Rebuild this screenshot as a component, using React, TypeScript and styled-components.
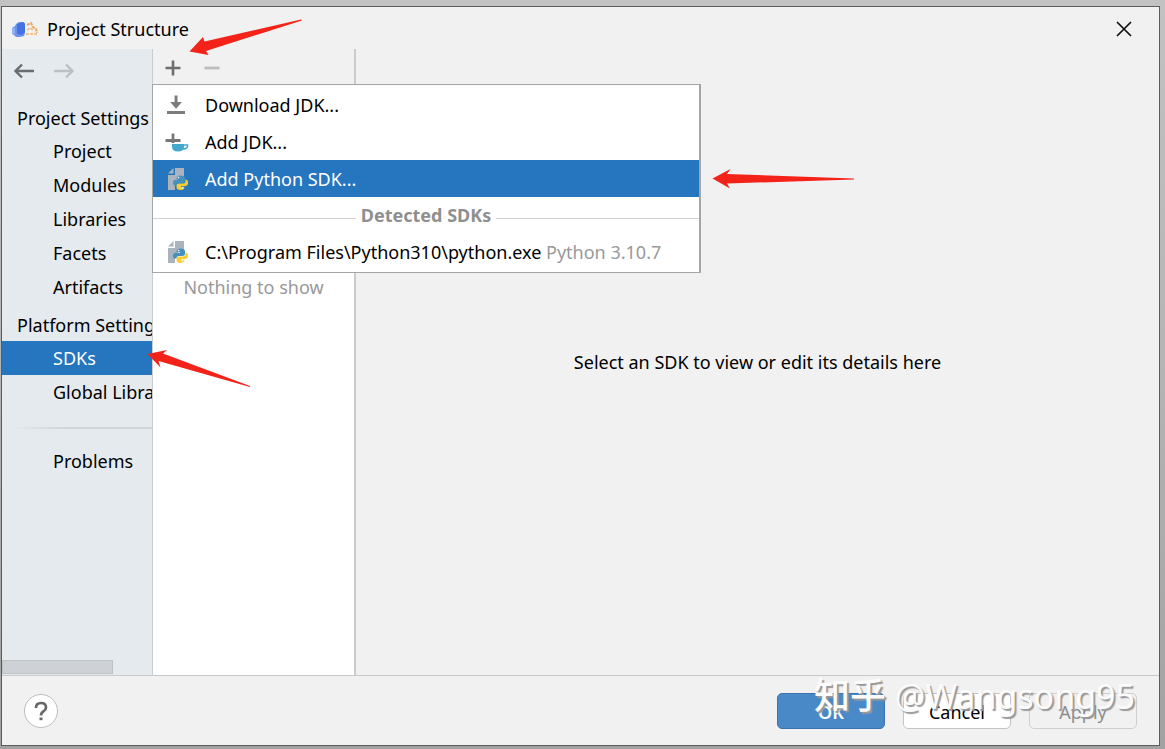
import React from "react";
import styled, { createGlobalStyle, css } from "styled-components";

const GlobalStyle = createGlobalStyle`
  *, *::before, *::after { box-sizing: border-box; }
  body {
    margin: 0;
    background: #b9b9b9;
    color: #000;
    font: 18px/24px "Noto Sans", "Noto Sans CJK SC", sans-serif;
  }
  button { font: inherit; color: inherit; padding: 0; border: 0; background: none; text-align: left; }
`;

const Desktop = styled.div`
  display: flex;
  min-height: 100vh;
  padding: 6px 5px 3px 1px;
  background: linear-gradient(#c2c2c2, #b4b4b4 50%, #a2a2a2);
`;

const Dialog = styled.main`
  position: relative;
  flex: 1;
  min-width: 0;
  display: flex;
  flex-direction: column;
  border: 1px solid #5c5c5c;
  background: #f1f1f1;
`;

const TitleBar = styled.header`
  display: flex;
  align-items: center;
  gap: 8px;
  height: 42px;
  padding: 2px 23px 0 10px;
`;

const Title = styled.h1`
  flex: 1;
  margin: 0;
  font-size: 18px;
  font-weight: 400;
`;

const IconButton = styled.button`
  display: flex;
  align-items: center;
  justify-content: center;
  width: 24px;
  height: 24px;
`;

const Body = styled.div`
  flex: 1;
  display: flex;
  min-height: 0;
`;

const Sidebar = styled.nav`
  display: flex;
  flex-direction: column;
  flex: 0 0 151px;
  overflow: hidden;
  white-space: nowrap;
  background: #e5eaee;
  border-right: 1px solid #c9cccf;
`;

const History = styled.div`
  display: flex;
  gap: 16px;
  height: 50px;
  padding: 10px 0 0 10px;
`;

const GroupTitle = styled.h2`
  margin: 0;
  height: 35px;
  padding: 7px 0 0 15px;
  font-size: 18px;
  line-height: 24px;
  font-weight: 400;
`;

const NavList = styled.ul`
  margin: 0;
  padding: 0 0 2px;
  list-style: none;
`;

const NavItem = styled.button<{ $active?: boolean }>`
  display: block;
  width: 100%;
  height: 34px;
  padding-left: 51px;
  ${(p) => p.$active && css`background: #2675bf; color: #fff;`}
`;

const Divider = styled.hr`
  width: 100%;
  height: 2px;
  margin: 16px 0 15px;
  border: 0;
  background: linear-gradient(90deg, transparent 8%, #d2d6d9 40%);
`;

const ScrollThumb = styled.div`
  width: 111px;
  height: 14px;
  margin: auto 0 1px;
  background: #ced1d5;
  border: 1px solid #bfc2c5;
`;

const ListPane = styled.section`
  position: relative;
  display: flex;
  flex-direction: column;
  flex: 0 0 203px;
  border-right: 2px solid #cbcbcb;
`;

const Toolbar = styled.div`
  display: flex;
  align-items: center;
  gap: 15px;
  height: 35px;
  padding: 3px 0 0 8px;
`;

const EmptyList = styled.div`
  flex: 1;
  padding-top: 191px;
  background: #fff;
  color: #999;
  text-align: center;
`;

const Popup = styled.div`
  position: absolute;
  z-index: 2;
  top: 35px;
  left: -1px;
  width: 549px;
  padding: 1px 0 2px;
  border: 1px solid #a5a5a5;
  border-right-width: 2px;
  background: #fff;
`;

const MenuItem = styled.button<{ $active?: boolean }>`
  display: flex;
  align-items: center;
  gap: 16px;
  width: 100%;
  height: 37px;
  padding-left: 12px;
  white-space: nowrap;
  ${(p) => p.$active && css`background: #2675bf; color: #fff;`}
`;

const Detail = styled.span`
  color: #999;
`;

const Separator = styled.div`
  display: flex;
  align-items: center;
  gap: 5px;
  height: 36px;
  color: #8f8f8f;
  font-weight: 700;
  &::before, &::after {
    content: "";
    flex: 1;
    height: 1px;
    margin-top: 6px;
    background: #d1d1d1;
  }
`;

const Details = styled.section`
  flex: 1;
  display: flex;
  align-items: center;
  justify-content: center;
`;

const Footer = styled.footer`
  position: relative;
  display: flex;
  align-items: center;
  gap: 18px;
  height: 70px;
  padding: 0 22px;
  border-top: 1px solid #c9c9c9;
`;

const HelpButton = styled.button`
  display: flex;
  align-items: center;
  justify-content: center;
  width: 34px;
  height: 34px;
  margin-right: auto;
  border: 1px solid #bdbdbd;
  border-radius: 50%;
  background: #fff;
`;

const DialogButton = styled.button<{ $kind?: "primary" | "disabled" }>`
  width: 108px;
  height: 36px;
  padding-top: 2px;
  border: 1px solid #c4c4c4;
  border-radius: 5px;
  background: #fff;
  text-align: center;
  ${(p) => p.$kind === "primary" && css`
    background: #4a89c8; border-color: #3c73ad; color: #fff; font-weight: 600;
  `}
  ${(p) => p.$kind === "disabled" && css`
    background: transparent; border-color: #cfcfcf; color: #8c8c8c;
  `}
`;

const Watermark = styled.div`
  position: absolute;
  right: 24px;
  top: 0;
  color: #fbfbfb;
  font-size: 34px;
  line-height: 40px;
  white-space: nowrap;
  pointer-events: none;
  text-shadow: 2px 2px 1px #999;
`;

const WatermarkSite = styled.span`
  font-size: 36px;
  font-weight: 500;
`;

const Annotations = styled.svg`
  position: absolute;
  z-index: 3;
  top: 0;
  left: 0;
  pointer-events: none;
`;

const AppIcon = () => (
  <svg width="27" height="18" viewBox="0 0 27 18" aria-hidden="true">
    <path d="M0 8l3-2 1-2 3-2h5l1 2v9l-1 3-4 1H4l-2-2-2-1z" fill="#6d93ee" />
    <path d="M5 4l6-2 2 2v8l-3 3-5-1z" fill="#4572e0" />
    <path d="M0 8h3v6H0z" fill="#8fb0f5" />
    <path d="M15 5l4-2 2 4 3 2 1 4" fill="none" stroke="#efa55a" strokeWidth="2" strokeDasharray="3 1" />
    <path d="M15 10l3-2 3 2M14 14h11" fill="none" stroke="#f0b476" strokeWidth="1.5" strokeDasharray="3 1" />
  </svg>
);

const Arrow = ({ forward }: { forward?: boolean }) => (
  <svg width="20" height="16" viewBox="0 0 20 16" fill="none" strokeWidth="2.4" aria-hidden="true"
    stroke={forward ? "#bcc0c3" : "#6a6d70"}>
    <path d={forward ? "M0 8h18M12 1.5L18.5 8 12 14.5" : "M20 8H2M8 1.5L1.5 8 8 14.5"} />
  </svg>
);

const CloseIcon = () => (
  <svg width="16" height="16" viewBox="0 0 16 16" stroke="#111" strokeWidth="1.7" aria-hidden="true">
    <path d="M1 1l14 14M15 1L1 15" />
  </svg>
);

const Plus = () => (
  <svg width="16" height="16" viewBox="0 0 16 16" stroke="#6e6e6e" strokeWidth="2.6" aria-hidden="true">
    <path d="M.5 8h15M8 .5v15" />
  </svg>
);

const Minus = () => (
  <svg width="16" height="16" viewBox="0 0 16 16" stroke="#bdbdbd" strokeWidth="2.8" aria-hidden="true">
    <path d="M.5 8h15" />
  </svg>
);

const DownloadIcon = () => (
  <svg width="24" height="24" viewBox="0 0 24 24" aria-hidden="true">
    <path d="M2 18h18v3H2z" fill="#7c7c7c" />
    <path d="M9.600 2.500h2.900V9h4.400L11.050 15.800 5.200 9h4.400z" fill="#7c7c7c" />
  </svg>
);

const AddJdkIcon = () => (
  <svg width="24" height="24" viewBox="0 0 24 24" aria-hidden="true">
    <path d="M.5 10.500h15M8 3.500V13" stroke="#777" strokeWidth="2.800" />
    <path d="M7 14h12v2.500q0 5-6 5t-6-5z" fill="#43a9cf" />
    <path d="M18 15h4.500v1.500q-.5 2.500-5 2.500" fill="none" stroke="#43a9cf" strokeWidth="1.500" />
  </svg>
);

const PythonIcon = () => (
  <svg width="24" height="24" viewBox="0 0 24 24" aria-hidden="true">
    <path d="M10 1h9v10h-4l-5 4v8H3V8h7z" fill="#a9b4bf" />
    <path d="M8.500 1v5.500H3z" fill="#a9b4bf" />
    <path d="M11.500 12q0-3.500 4-3.500 4.500 0 4.500 3v2.500q0 2-2.500 2h-3.500q-2.500 0-2.500 2.500H10q-2 0-2-2.800 0-3 3-3h4V12z" fill="#4590bd" />
    <path d="M20.500 12.500q2.500 0 2.500 3.200t-3 3.300h-4v.8h3.500q0 3.200-4 3.200T11.500 20v-1.500q0-2 2.500-2h4q2.500 0 2.500-2.500z" fill="#f5cf31" />
    <circle cx="13.600" cy="10.600" r=".8" fill="#fff" />
    <circle cx="17.500" cy="21" r=".8" fill="#fff" />
  </svg>
);

const HelpIcon = () => (
  <svg width="16" height="20" viewBox="0 0 16 20" aria-hidden="true">
    <path d="M3 7q0-5 5-5t5 4.500q0 2.200-2.500 3.800T8 14.500" fill="none" stroke="#686868" strokeWidth="2.700" />
    <path d="M6.500 16.500h3v2.700h-3z" fill="#686868" />
  </svg>
);

const project = ["Project", "Modules", "Libraries", "Facets", "Artifacts"];
const platform = ["SDKs", "Global Libraries"];

export default function App() {
  return (
    <>
      <GlobalStyle />
      <Desktop>
        <Dialog>
          <TitleBar>
            <AppIcon />
            <Title>Project Structure</Title>
            <IconButton aria-label="Close"><CloseIcon /></IconButton>
          </TitleBar>
          <Body>
            <Sidebar>
              <History>
                <IconButton aria-label="Back"><Arrow /></IconButton>
                <IconButton aria-label="Forward"><Arrow forward /></IconButton>
              </History>
              <GroupTitle>Project Settings</GroupTitle>
              <NavList>
                {project.map((name) => <li key={name}><NavItem>{name}</NavItem></li>)}
              </NavList>
              <GroupTitle>Platform Settings</GroupTitle>
              <NavList>
                {platform.map((name) => (
                  <li key={name}><NavItem $active={name === "SDKs"}>{name}</NavItem></li>
                ))}
              </NavList>
              <Divider />
              <NavItem>Problems</NavItem>
              <ScrollThumb />
            </Sidebar>
            <ListPane>
              <Toolbar>
                <IconButton aria-label="Add"><Plus /></IconButton>
                <IconButton aria-label="Remove"><Minus /></IconButton>
              </Toolbar>
              <EmptyList>Nothing to show</EmptyList>
              <Popup>
                <MenuItem><DownloadIcon />Download JDK...</MenuItem>
                <MenuItem><AddJdkIcon />Add JDK...</MenuItem>
                <MenuItem $active><PythonIcon />Add Python SDK...</MenuItem>
                <Separator>Detected SDKs</Separator>
                <MenuItem>
                  <PythonIcon />
                  <span>C:\Program Files\Python310\python.exe <Detail>Python 3.10.7</Detail></span>
                </MenuItem>
              </Popup>
            </ListPane>
            <Details>Select an SDK to view or edit its details here</Details>
          </Body>
          <Footer>
            <HelpButton aria-label="Help"><HelpIcon /></HelpButton>
            <DialogButton $kind="primary">OK</DialogButton>
            <DialogButton>Cancel</DialogButton>
            <DialogButton $kind="disabled">Apply</DialogButton>
            <Watermark><WatermarkSite>知乎</WatermarkSite> @Wangsong95</Watermark>
          </Footer>
          <Annotations width="860" height="400" viewBox="2 7 860 400" fill="#f4231a" aria-hidden="true">
            <path d="M189.500 51.500L203 37l1.500 4.500L301 19.500l1 1L206 51l2.500 4z" />
            <path d="M712.500 178.500L730.500 169l-3.500 5 127 4.500v1L727 183.500l3 5z" />
            <path d="M147.500 354L167 350l-4 3.500 87 32.500v1L158.500 361l2 6.500z" />
          </Annotations>
        </Dialog>
      </Desktop>
    </>
  );
}
